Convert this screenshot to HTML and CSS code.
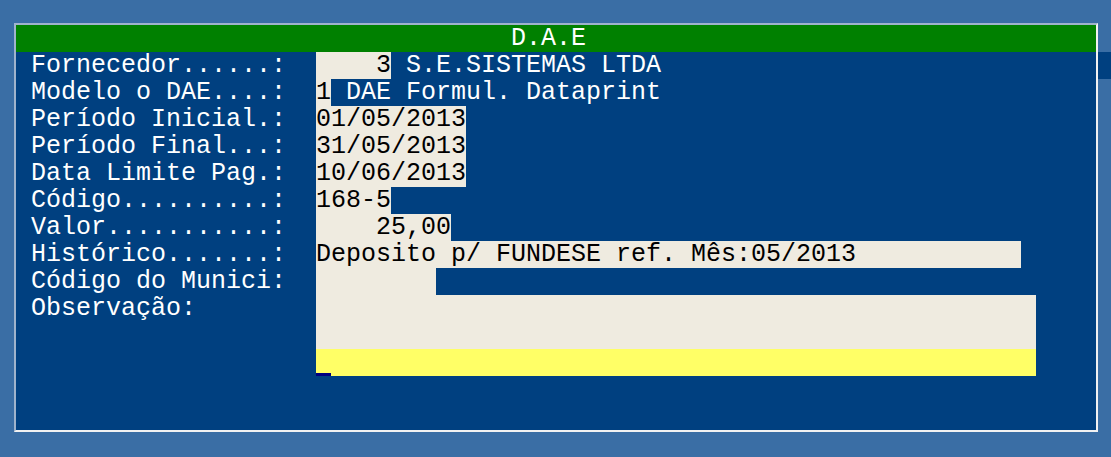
FILE: index.html
```html
<!DOCTYPE html>
<html lang="pt">
<head>
<meta charset="utf-8">
<title>D.A.E</title>
<link rel="stylesheet" href="styles.css">
</head>
<body>
<div class="panel">
  <div class="row title"><span class="title-text">D.A.E</span></div>
  <div class="row first"><span class="label">Fornecedor......:</span><span class="field w5">    3</span><span class="text"> S.E.SISTEMAS LTDA</span></div>
  <div class="row"><span class="label">Modelo o DAE....:</span><span class="field w1">1</span><span class="text"> DAE Formul. Dataprint</span></div>
  <div class="row"><span class="label">Período Inicial.:</span><span class="field w10">01/05/2013</span></div>
  <div class="row"><span class="label">Período Final...:</span><span class="field w10">31/05/2013</span></div>
  <div class="row"><span class="label">Data Limite Pag.:</span><span class="field w10">10/06/2013</span></div>
  <div class="row"><span class="label">Código..........:</span><span class="field w5">168-5</span></div>
  <div class="row"><span class="label">Valor...........:</span><span class="field w9">    25,00</span></div>
  <div class="row"><span class="label">Histórico.......:</span><span class="field w47">Deposito p/ FUNDESE ref. Mês:05/2013</span></div>
  <div class="row"><span class="label">Código do Munici:</span><span class="field w8"></span></div>
  <div class="row"><span class="label">Observação:</span><span class="field w48"></span></div>
  <div class="row"><span class="label"></span><span class="field w48"></span></div>
  <div class="row"><span class="label"></span><span class="field w48 active"><span class="cursor"></span></span></div>
  <div class="row"></div>
  <div class="row"></div>
</div>
</body>
</html>
```

FILE: styles.css
```css
html, body {
  margin: 0;
  padding: 0;
}

body {
  background: #3a6ea5;
  overflow: hidden;
  font-family: "Courier New", "Nimbus Mono PS", "FreeMono", "Liberation Mono", monospace;
  font-size: 25px;
  line-height: 27px;
}

.panel {
  margin: 23px 0 0 14px;
  width: 1080px;
  background: #004080;
  border-style: solid;
  border-width: 2px;
  border-color: #9fb3cc #f2f2f2 #f2f2f2 #9fb3cc;
}

.row {
  display: flex;
  height: 27px;
  white-space: pre;
  color: #ffffff;
}

.row.title {
  background: #008000;
}

.title-text {
  padding-left: 33ch;
}

.row.first {
  position: relative;
}

.row.first::after {
  content: "";
  position: absolute;
  left: calc(100% + 2px);
  top: 0;
  width: 20px;
  height: 100%;
  background: #004080;
}

.label {
  width: 19ch;
  padding-left: 1ch;
  flex: none;
}

.field {
  flex: none;
  background: #efebe0;
  color: #000000;
  height: 27px;
}

.field.active {
  background: #ffff66;
  display: flex;
  align-items: flex-end;
}

.cursor {
  width: 1ch;
  height: 3px;
  background: #000080;
}

.text {
  color: #ffffff;
}

.w1 { width: 1ch; }
.w5 { width: 5ch; }
.w8 { width: 8ch; }
.w9 { width: 9ch; }
.w10 { width: 10ch; }
.w47 { width: 47ch; }
.w48 { width: 48ch; }
```
